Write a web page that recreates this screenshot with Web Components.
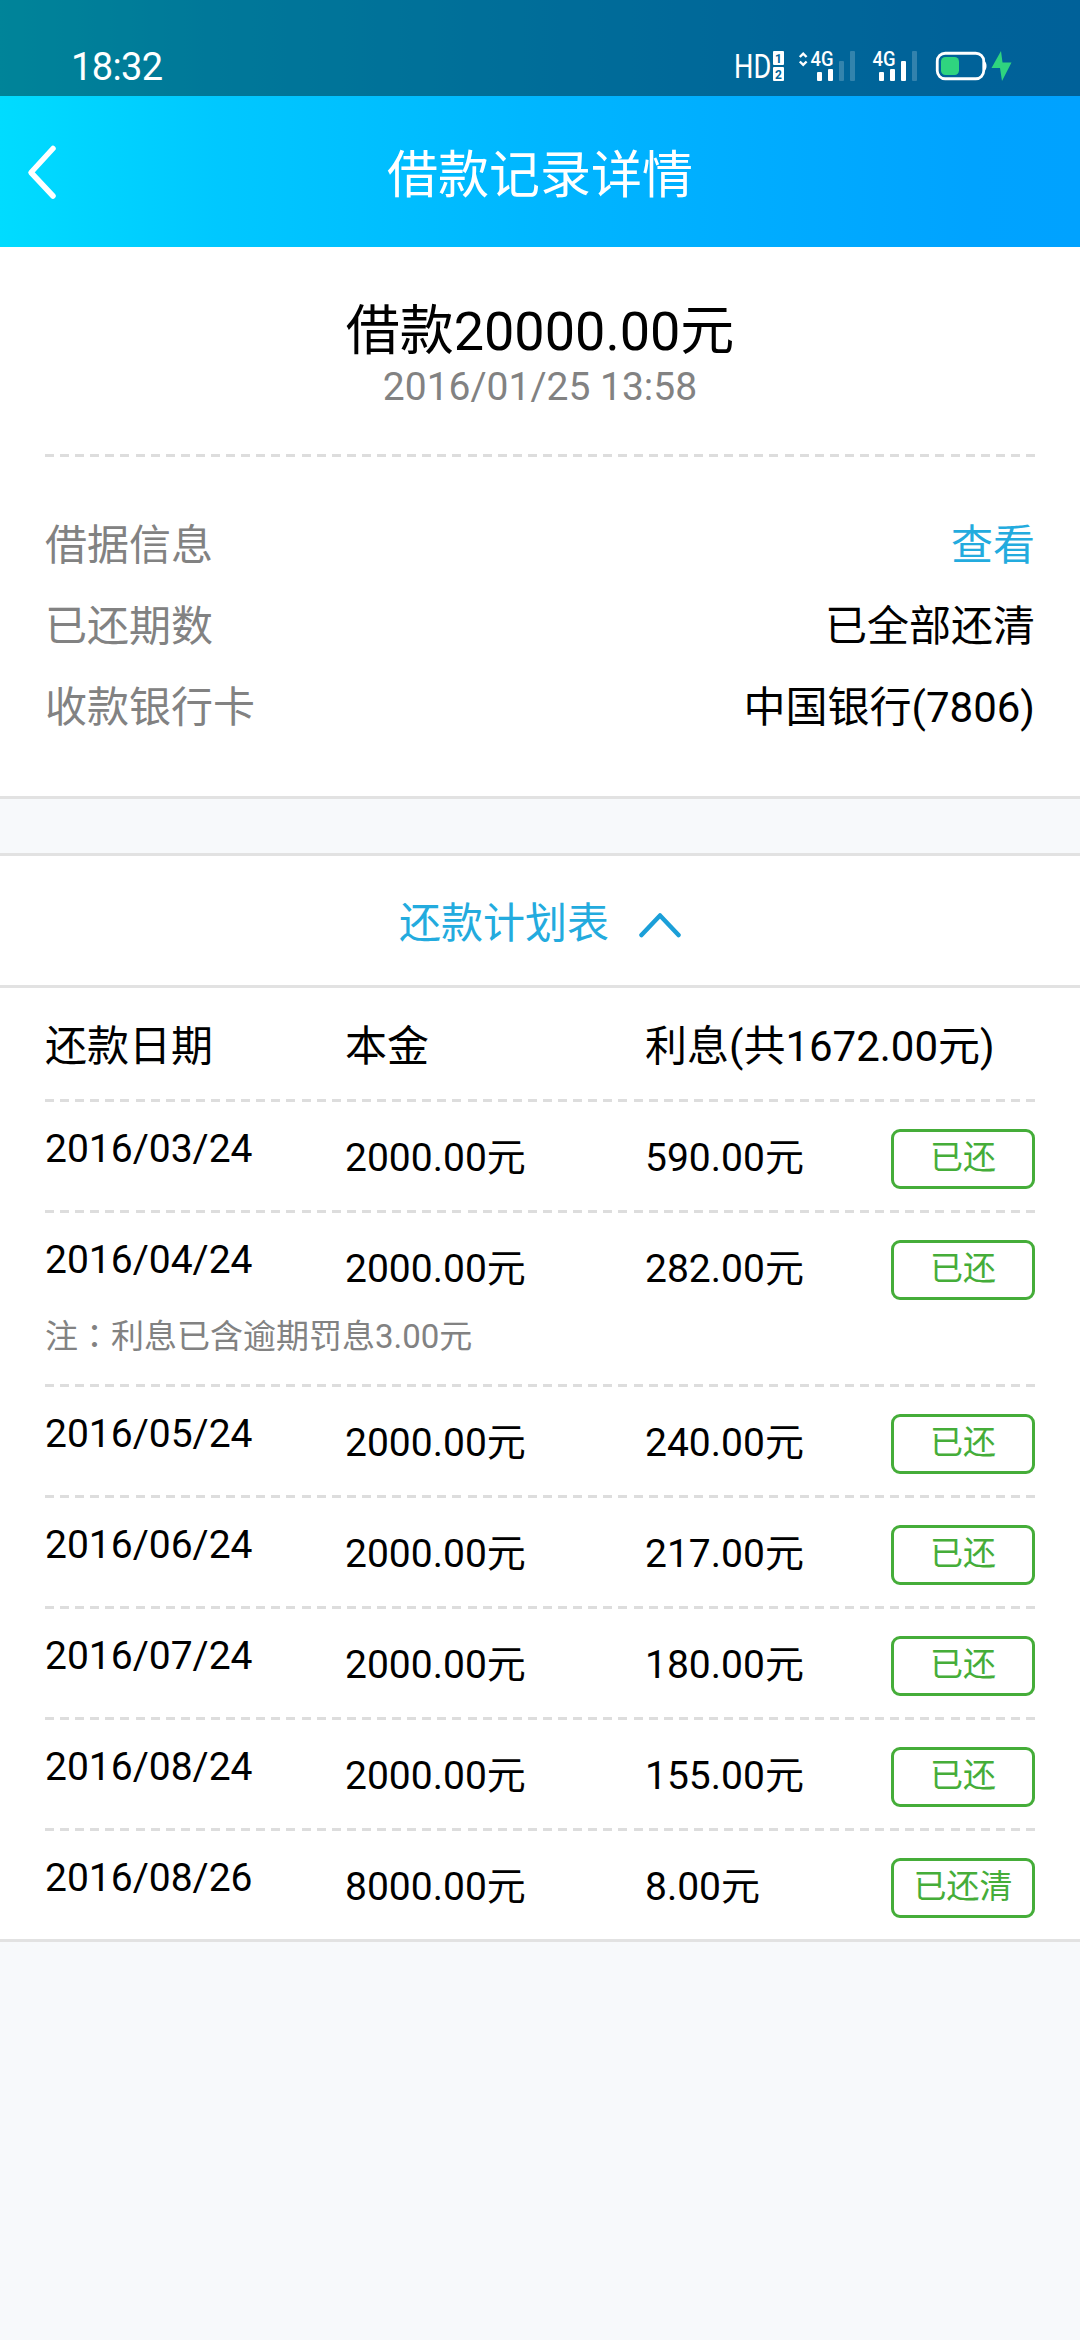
<!DOCTYPE html>
<html lang="zh-CN">
<head>
<meta charset="utf-8">
<title>借款记录详情</title>
<style>
  body {
    margin: 0;
    background: #f7f9fb;
    color: #000;
    font-family: Roboto, "Noto Sans CJK SC", sans-serif;
    --line: #e2e2e2;
    --muted: #828282;
    --link: #23abde;
    --paid: #45ad39;
  }
</style>
</head>
<body>
<loan-app>
  <status-bar slot="top">18:32</status-bar>
  <nav-header slot="top">借款记录详情</nav-header>

  <loan-card>
    <loan-summary>
      借款20000.00元
      <span slot="date">2016/01/25 13:58</span>
    </loan-summary>
    <dashed-line></dashed-line>
    <info-list>
      <info-row label="借据信息" link>查看</info-row>
      <info-row label="已还期数">已全部还清</info-row>
      <info-row label="收款银行卡">中国银行(7806)</info-row>
    </info-list>
  </loan-card>

  <loan-card topline>
    <plan-toggle>还款计划表</plan-toggle>
    <plan-table></plan-table>
  </loan-card>
</loan-app>

<script>
const PAYMENTS = [
  { date: '2016/03/24', principal: '2000.00元', interest: '590.00元', status: '已还' },
  { date: '2016/04/24', principal: '2000.00元', interest: '282.00元', status: '已还', note: '注：利息已含逾期罚息3.00元' },
  { date: '2016/05/24', principal: '2000.00元', interest: '240.00元', status: '已还' },
  { date: '2016/06/24', principal: '2000.00元', interest: '217.00元', status: '已还' },
  { date: '2016/07/24', principal: '2000.00元', interest: '180.00元', status: '已还' },
  { date: '2016/08/24', principal: '2000.00元', interest: '155.00元', status: '已还' },
  { date: '2016/08/26', principal: '8000.00元', interest: '8.00元', status: '已还清' }
]

/**
 * Registers an element whose shadow root is cloned from the given markup.
 */
function define (name, html, setup) {
  const template = document.createElement('template')
  template.innerHTML = html

  customElements.define(name, class extends HTMLElement {
    constructor () {
      super()
      this.attachShadow({ mode: 'open' })
        .appendChild(template.content.cloneNode(true))
    }

    connectedCallback () {
      if (setup) {
        setup(this, this.shadowRoot)
      }
    }
  })
}

define('loan-app', `
<style>
  :host { display: block; min-height: 2340px; }
  .top { background: linear-gradient(90deg, #00dcff 0%, #00c8ff 20%, #00b6ff 50%, #00a3ff 90%, #00a2ff 100%); }
  main { display: flex; flex-direction: column; gap: 54px; }
</style>
<div class="top"><slot name="top"></slot></div>
<main><slot></slot></main>
`)

define('status-bar', `
<style>
  :host {
    display: flex;
    justify-content: space-between;
    height: 96px;
    box-sizing: border-box;
    padding: 44px 60px 0 71px;
    background: rgba(0, 0, 0, .4);
    color: #fff;
  }
  .time { padding-top: 1px; font-size: 38px; line-height: 44px; letter-spacing: -.6px; }
  svg { display: block; margin-top: 2px; }
</style>
<span class="time"><slot></slot></span>
<svg width="288" height="40" viewBox="732 46 288 40" fill="#fff" font-family="Roboto, sans-serif">
  <text transform="translate(734 78) scale(.8 1)" font-size="34">HD</text>
  <rect x="773" y="51" width="11" height="14" rx="1"/>
  <rect x="773" y="67" width="11" height="14" rx="1"/>
  <g fill="#00659a" font-size="12" font-weight="700" text-anchor="middle">
    <text x="778.5" y="62.5">1</text>
    <text x="778.5" y="78.5">2</text>
  </g>
  <path d="M799.8 57l3.4-3.4 3.4 3.4M799.8 61.5l3.4 3.4 3.4-3.4" fill="none" stroke="#fff" stroke-width="2.4"/>
  <g font-size="21" font-weight="500">
    <text x="810.5" y="66" textLength="23" lengthAdjust="spacingAndGlyphs">4G</text>
    <text x="872.5" y="66" textLength="23" lengthAdjust="spacingAndGlyphs">4G</text>
  </g>
  <rect x="817" y="72" width="5" height="9" rx="1"/>
  <rect x="828" y="69" width="5" height="12" rx="1"/>
  <rect x="879" y="72" width="5" height="9" rx="1"/>
  <rect x="890" y="69" width="5" height="12" rx="1"/>
  <rect x="901" y="61" width="5" height="20" rx="1"/>
  <g opacity=".2">
    <rect x="839" y="61" width="5" height="20" rx="1"/>
    <rect x="850" y="51" width="5" height="30" rx="1"/>
    <rect x="912" y="51" width="5" height="30" rx="1"/>
  </g>
  <rect x="937.25" y="53.25" width="46.5" height="25.5" rx="8" fill="none" stroke="#fff" stroke-width="2.8"/>
  <path d="M984 61q2.500 1 2.500 5t-2.500 5z"/>
  <rect x="941" y="57" width="18" height="18" rx="4.5" fill="#2fd47f"/>
  <path d="M1001 51l-9.500 17h8.500l2 13 9.500-18.500h-9z" fill="#2fd47f"/>
</svg>
`)

define('nav-header', `
<style>
  :host {
    display: grid;
    grid-template-columns: 120px 1fr 120px;
    align-items: center;
    height: 151px;
    color: #fff;
  }
  svg { display: block; margin-left: 26px; }
  h1 {
    margin: 0;
    padding-top: 8px;
    font-size: 51px;
    font-weight: 400;
    line-height: 60px;
    text-align: center;
  }
</style>
<svg width="34" height="56" viewBox="0 0 34 56" fill="none" stroke="#fff" stroke-width="5.5" stroke-linecap="round" stroke-linejoin="round">
  <path d="M27 4.500L5 28.500l22 23.500"/>
</svg>
<h1><slot></slot></h1>
`)

define('loan-card', `
<style>
  :host { display: block; background: #fff; border-bottom: 3px solid var(--line); }
  :host([topline]) { border-top: 3px solid var(--line); }
</style>
<slot></slot>
`)

// 9px dashes, spaced so that a dash closes the line at both ends
define('dashed-line', `
<style>
  :host {
    display: block;
    height: 3px;
    margin: 0 45px;
    background: repeating-linear-gradient(90deg, #ddd 0 9px, transparent 9px 15.092px);
  }
</style>
`)

define('loan-summary', `
<style>
  :host { display: block; padding: 54px 0 41px; text-align: center; }
  .amount { font-size: 54px; line-height: 61px; }
  .date { font-size: 39px; line-height: 51px; color: var(--muted); }
</style>
<div class="amount"><slot></slot></div>
<div class="date"><slot name="date"></slot></div>
`)

define('info-list', `
<style>
  :host { display: flex; flex-direction: column; padding: 48px 45px; }
</style>
<slot></slot>
`)

define('info-row', `
<style>
  :host { display: flex; justify-content: space-between; font-size: 42px; line-height: 81px; }
  .label { color: var(--muted); }
  :host([link]) .value { color: var(--link); }
</style>
<span class="label"></span>
<span class="value"><slot></slot></span>
`, (host, root) => {
  root.querySelector('.label').textContent = host.getAttribute('label')
})

define('plan-toggle', `
<style>
  :host {
    display: flex;
    align-items: center;
    justify-content: center;
    gap: 30px;
    box-sizing: border-box;
    height: 132px;
    padding-top: 6px;
    border-bottom: 3px solid var(--line);
    color: var(--link);
    font-size: 42px;
    line-height: 60px;
  }
  svg { margin-top: 3px; }
</style>
<span><slot></slot></span>
<svg width="42" height="26" viewBox="0 0 42 26" fill="none" stroke="#1b9fd8" stroke-width="4.5" stroke-linecap="round" stroke-linejoin="round">
  <path d="M2.500 23L21 3.500 39.500 23"/>
</svg>
`)

define('status-badge', `
<style>
  :host {
    display: block;
    box-sizing: border-box;
    width: 144px;
    height: 60px;
    border: 3px solid var(--paid);
    border-radius: 9px;
    color: var(--paid);
    font-size: 33px;
    line-height: 51px;
    text-align: center;
  }
</style>
<slot></slot>
`)

define('plan-row', `
<style>
  :host { display: block; padding: 27px 45px 21px; }
  .cells { display: grid; grid-template-columns: 300px 300px 1fr 144px; height: 60px; font-size: 39px; line-height: 59px; }
  .date { line-height: 41px; }
  .note { padding: 16px 0 5px; font-size: 33px; line-height: 42px; color: var(--muted); }
  .colon { font-family: "Noto Sans CJK TC", sans-serif; line-height: 0; }
</style>
<div class="cells">
  <span class="date"><slot name="date"></slot></span>
  <span><slot name="principal"></slot></span>
  <span><slot name="interest"></slot></span>
  <status-badge><slot name="status"></slot></status-badge>
</div>
`, (host, root) => {
  const note = host.getAttribute('note')
  if (note) {
    const [label, text] = note.split('：')
    const div = document.createElement('div')
    div.className = 'note'
    // the TC face centres the colon in its square
    const colon = document.createElement('span')
    colon.className = 'colon'
    colon.lang = 'zh-TW'
    colon.textContent = '：'
    div.append(label, colon, text)
    root.appendChild(div)
  }
})

define('plan-table', `
<style>
  :host { display: block; }
  .head {
    display: grid;
    grid-template-columns: 300px 300px 1fr;
    padding: 6px 45px 0;
    font-size: 42px;
    line-height: 105px;
  }
</style>
<div class="head">
  <span>还款日期</span>
  <span>本金</span>
  <span>利息(共1672.00元)</span>
</div>
`, (host, root) => {
  for (const payment of PAYMENTS) {
    root.appendChild(document.createElement('dashed-line'))
    const row = document.createElement('plan-row')
    for (const key of ['date', 'principal', 'interest', 'status']) {
      const cell = document.createElement('span')
      cell.slot = key
      cell.textContent = payment[key]
      row.appendChild(cell)
    }
    if (payment.note) {
      row.setAttribute('note', payment.note)
    }
    root.appendChild(row)
  }
})
</script>
</body>
</html>
